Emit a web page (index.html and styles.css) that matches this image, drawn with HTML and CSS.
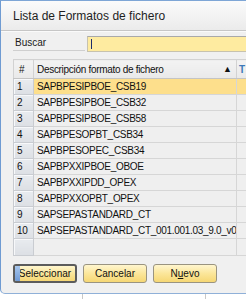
FILE: index.html
```html
<!DOCTYPE html>
<html lang="es">
<head>
    <meta charset="UTF-8">
    <title>Lista de Formatos de fichero</title>
    <link rel="stylesheet" href="styles.css">
</head>
<body>
    <div class="window">
        <header class="titlebar">Lista de Formatos de fichero</header>

        <div class="search">
            <label class="search-label">Buscar</label>
            <div class="search-input"><span class="caret"></span></div>
        </div>

        <table class="grid">
            <thead>
                <tr>
                    <th class="num">#</th>
                    <th class="desc">Descripción formato de fichero<span class="sort">&#9650;</span></th>
                    <th class="extra">T</th>
                </tr>
            </thead>
            <tbody>
                <tr class="selected"><td class="num">1</td><td class="desc">SAPBPESIPBOE_CSB19</td><td class="extra"></td></tr>
                <tr><td class="num">2</td><td class="desc">SAPBPESIPBOE_CSB32</td><td class="extra"></td></tr>
                <tr><td class="num">3</td><td class="desc">SAPBPESIPBOE_CSB58</td><td class="extra"></td></tr>
                <tr><td class="num">4</td><td class="desc">SAPBPESOPBT_CSB34</td><td class="extra"></td></tr>
                <tr><td class="num">5</td><td class="desc">SAPBPESOPEC_CSB34</td><td class="extra"></td></tr>
                <tr><td class="num">6</td><td class="desc">SAPBPXXIPBOE_OBOE</td><td class="extra"></td></tr>
                <tr><td class="num">7</td><td class="desc">SAPBPXXIPDD_OPEX</td><td class="extra"></td></tr>
                <tr><td class="num">8</td><td class="desc">SAPBPXXOPBT_OPEX</td><td class="extra"></td></tr>
                <tr><td class="num">9</td><td class="desc">SAPSEPASTANDARD_CT</td><td class="extra"></td></tr>
                <tr><td class="num">10</td><td class="desc">SAPSEPASTANDARD_CT_001.001.03_9.0_v0</td><td class="extra"></td></tr>
                <tr class="empty"><td class="num"></td><td class="desc"></td><td class="extra"></td></tr>
            </tbody>
        </table>

        <div class="buttons">
            <button class="btn default"><span class="focus-strip"></span>Seleccionar</button>
            <button class="btn">Cancelar</button>
            <button class="btn">N<u>u</u>evo</button>
        </div>
    </div>

    <div class="backdrop">
        <span class="backdrop-col first"></span>
        <span class="backdrop-col second"></span>
    </div>
</body>
</html>
```

FILE: styles.css
```css
body {
    margin: 0;
    background-color: #ffffff;
    font-family: "Liberation Sans", Arial, sans-serif;
    overflow: hidden;
    width: 246px;
    height: 299px;
}

.window {
    width: 245px;
    height: 292px;
    background-color: #f0f0f0;
    border-top: 1px solid #7ea6d6;
    border-left: 1px solid #6f9bd2;
    border-bottom: 1px solid #8fb0d8;
    border-bottom-left-radius: 5px;
    overflow: hidden;
}

.titlebar {
    height: 29px;
    line-height: 30px;
    padding-left: 12px;
    font-size: 12px;
    color: #1e1e1e;
    background: linear-gradient(#fbfbfb, #ebebeb);
    border-bottom: 1px solid #c6c6c6;
    box-shadow: 0 1px 0 #fafafa;
}

.search {
    display: flex;
    align-items: flex-start;
    margin-top: 5px;
    height: 15px;
}

.search-label {
    width: 70px;
    margin-left: 12px;
    padding-left: 2px;
    height: 14px;
    line-height: 14px;
    font-size: 10px;
    color: #202020;
    border-bottom: 1px solid #cfcfcf;
}

.search-input {
    flex: 1;
    margin-left: 2px;
    height: 12px;
    background-color: #feeba0;
    border: 1px solid #c7c2ae;
    border-top-color: #a9a9a9;
    border-right: none;
    padding: 1px 3px;
}

.caret {
    display: block;
    width: 1px;
    height: 10px;
    margin-top: 1px;
    background-color: #1d2c6b;
}

.grid {
    border-collapse: collapse;
    margin: 8px 0 0 12px;
    width: 258px;
    table-layout: fixed;
    font-size: 10px;
    letter-spacing: -0.3px;
    color: #111111;
}

.grid th {
    height: 18px;
    padding: 0;
    font-weight: normal;
    text-align: left;
    background: linear-gradient(#f3f3f3, #e9e9e9);
    border: 1px solid #d2d2d2;
    border-bottom-color: #c4c4c4;
}

.grid th.desc {
    position: relative;
    padding-left: 3px;
}

.grid th.extra {
    padding-left: 2px;
    color: #3d79b8;
    font-weight: bold;
}

.sort {
    position: absolute;
    right: 4px;
    top: 4px;
    font-size: 9px;
    letter-spacing: 0;
    color: #111111;
}

.grid td {
    height: 15px;
    padding: 0;
    background-color: #efefef;
    border: 1px solid #d6d6d6;
    white-space: nowrap;
    overflow: hidden;
}

.grid .num {
    width: 20px;
    padding-left: 3px;
    box-sizing: border-box;
}

.grid td.num {
    background: linear-gradient(#e8ebef, #dcdfe4);
    box-shadow: inset 1px 1px 0 #f7f8fa;
    border-color: #c9ccd1;
}

.grid th.num {
    padding-left: 5px;
}

.grid .desc {
    width: 203px;
    padding-left: 3px;
    box-sizing: border-box;
}

.grid .extra {
    width: 35px;
}

.grid tr.selected td.desc,
.grid tr.selected td.extra {
    background-color: #fddf8c;
}

.grid tr.empty td {
    height: 16px;
}

.buttons {
    display: flex;
    gap: 6px;
    margin: 8px 0 0 12px;
}

.btn {
    position: relative;
    width: 64px;
    height: 19px;
    padding: 0;
    font-family: "Liberation Sans", Arial, sans-serif;
    font-size: 10px;
    color: #111111;
    background: linear-gradient(#fff6cf, #fbe69a 50%, #f6d774);
    border: 1px solid #9a9480;
    border-radius: 3px;
    overflow: hidden;
}

.btn.default {
    border: 2px solid #5c5c5c;
}

.focus-strip {
    position: absolute;
    left: 0;
    top: 0;
    bottom: 0;
    width: 5px;
    background: linear-gradient(#a9c8ee, #6f9ad6);
}

.backdrop {
    position: relative;
    height: 5px;
}

.backdrop-col {
    position: absolute;
    top: 0;
    bottom: 0;
    width: 1px;
    background-color: #c8c8c8;
}

.backdrop-col.first {
    left: 82px;
}

.backdrop-col.second {
    left: 205px;
}
```
